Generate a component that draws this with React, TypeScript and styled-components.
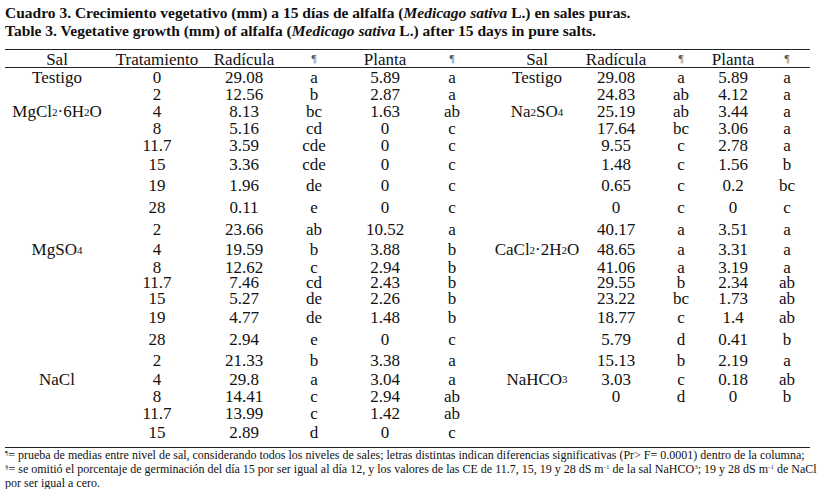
import React from 'react';
import styled, { createGlobalStyle } from 'styled-components';

const Global = createGlobalStyle`
  html, body { margin: 0; padding: 0; background: #fff; }
  body { font-family: "Liberation Serif", "Times New Roman", serif; color: #111; }
`;

/* column widths chosen so each column's centre sits where the reference centres it */
const COLS = '104px 96px 78px 62px 80px 54px 116px 42px 88px 16px 92px';

const Page = styled.div`
  width: 820px;
  height: 489px;
  padding: 4px 0 0 5px;
  box-sizing: border-box;
  overflow: hidden;
`;

const Caption = styled.div`
  font-weight: bold;
  font-size: 15.5px;
  line-height: 18px;
  white-space: nowrap;
`;

const Table = styled.div`
  margin-top: 9px;
  width: 805px;
  border-top: 1px solid #222;
  border-bottom: 1px solid #222;
  padding-bottom: 5px;
`;

const HeaderRow = styled.div`
  display: grid;
  grid-template-columns: ${COLS};
  height: 17px;
  border-bottom: 1px solid #222;
  font-size: 17px;
`;

const Row = styled.div<{ $h: number }>`
  display: grid;
  grid-template-columns: ${COLS};
  height: ${(p) => p.$h}px;
  font-size: 17px;
  line-height: 1;
`;

const Cell = styled.div`
  display: flex;
  align-items: center;
  justify-content: center;
  white-space: nowrap;
`;

const Pilcrow = styled.span`
  font-size: 11px;
  color: #555;
  align-self: flex-start;
  margin-top: 2px;
`;

const Sub = styled.sub`
  font-size: 11px;
  vertical-align: -4px;
  line-height: 0;
`;

const Notes = styled.div`
  font-size: 12px;
  line-height: 14px;
  white-space: nowrap;
`;

const Mark = styled.sup`
  font-size: 7px;
  vertical-align: 4px;
  line-height: 0;
  color: #333;
`;

const MgCl = () => (
  <>MgCl<Sub>2</Sub>·6H<Sub>2</Sub>O</>
);
const Na2SO4 = () => (
  <>Na<Sub>2</Sub>SO<Sub>4</Sub></>
);
const MgSO4 = () => (
  <>MgSO<Sub>4</Sub></>
);
const CaCl = () => (
  <>CaCl<Sub>2</Sub>·2H<Sub>2</Sub>O</>
);
const NaHCO3 = () => (
  <>NaHCO<Sub>3</Sub></>
);

type R = {
  h: number;
  s1?: React.ReactNode;
  t: string;
  l: [string, string, string, string];
  s2?: React.ReactNode;
  r?: [string, string, string, string];
};

const rows: R[] = [
  { h: 18, s1: 'Testigo', t: '0', l: ['29.08', 'a', '5.89', 'a'], s2: 'Testigo', r: ['29.08', 'a', '5.89', 'a'] },
  { h: 17, t: '2', l: ['12.56', 'b', '2.87', 'a'], r: ['24.83', 'ab', '4.12', 'a'] },
  { h: 17, s1: <MgCl />, t: '4', l: ['8.13', 'bc', '1.63', 'ab'], s2: <Na2SO4 />, r: ['25.19', 'ab', '3.44', 'a'] },
  { h: 17, t: '8', l: ['5.16', 'cd', '0', 'c'], r: ['17.64', 'bc', '3.06', 'a'] },
  { h: 17, t: '11.7', l: ['3.59', 'cde', '0', 'c'], r: ['9.55', 'c', '2.78', 'a'] },
  { h: 20, t: '15', l: ['3.36', 'cde', '0', 'c'], r: ['1.48', 'c', '1.56', 'b'] },
  { h: 22, t: '19', l: ['1.96', 'de', '0', 'c'], r: ['0.65', 'c', '0.2', 'bc'] },
  { h: 22, t: '28', l: ['0.11', 'e', '0', 'c'], r: ['0', 'c', '0', 'c'] },
  { h: 22, t: '2', l: ['23.66', 'ab', '10.52', 'a'], r: ['40.17', 'a', '3.51', 'a'] },
  { h: 19, s1: <MgSO4 />, t: '4', l: ['19.59', 'b', '3.88', 'b'], s2: <CaCl />, r: ['48.65', 'a', '3.31', 'a'] },
  { h: 15, t: '8', l: ['12.62', 'c', '2.94', 'b'], r: ['41.06', 'a', '3.19', 'a'] },
  { h: 15, t: '11.7', l: ['7.46', 'cd', '2.43', 'b'], r: ['29.55', 'b', '2.34', 'ab'] },
  { h: 18, t: '15', l: ['5.27', 'de', '2.26', 'b'], r: ['23.22', 'bc', '1.73', 'ab'] },
  { h: 21, t: '19', l: ['4.77', 'de', '1.48', 'b'], r: ['18.77', 'c', '1.4', 'ab'] },
  { h: 22, t: '28', l: ['2.94', 'e', '0', 'c'], r: ['5.79', 'd', '0.41', 'b'] },
  { h: 20, t: '2', l: ['21.33', 'b', '3.38', 'a'], r: ['15.13', 'b', '2.19', 'a'] },
  { h: 18, s1: 'NaCl', t: '4', l: ['29.8', 'a', '3.04', 'a'], s2: <NaHCO3 />, r: ['3.03', 'c', '0.18', 'ab'] },
  { h: 17, t: '8', l: ['14.41', 'c', '2.94', 'ab'], r: ['0', 'd', '0', 'b'] },
  { h: 17, t: '11.7', l: ['13.99', 'c', '1.42', 'ab'] },
  { h: 20, t: '15', l: ['2.89', 'd', '0', 'c'] },
];

export default function App() {
  return (
    <Page>
      <Global />
      <Caption>
        Cuadro 3. Crecimiento vegetativo (mm) a 15 días de alfalfa (<i>Medicago sativa</i> L.) en sales puras.
        <br />
        Table 3. Vegetative growth (mm) of alfalfa (<i>Medicago sativa</i> L.) after 15 days in pure salts.
      </Caption>
      <Table>
        <HeaderRow>
          <Cell>Sal</Cell>
          <Cell>Tratamiento</Cell>
          <Cell>Radícula</Cell>
          <Cell><Pilcrow>¶</Pilcrow></Cell>
          <Cell>Planta</Cell>
          <Cell><Pilcrow>¶</Pilcrow></Cell>
          <Cell>Sal</Cell>
          <Cell>Radícula</Cell>
          <Cell><Pilcrow>¶</Pilcrow></Cell>
          <Cell>Planta</Cell>
          <Cell><Pilcrow>¶</Pilcrow></Cell>
        </HeaderRow>
        {rows.map((r, i) => (
          <Row key={i} $h={r.h}>
            <Cell>{r.s1}</Cell>
            <Cell>{r.t}</Cell>
            {r.l.map((v, j) => (
              <Cell key={'l' + j}>{v}</Cell>
            ))}
            <Cell>{r.s2}</Cell>
            {(r.r ?? ['', '', '', '']).map((v, j) => (
              <Cell key={'r' + j}>{v}</Cell>
            ))}
          </Row>
        ))}
      </Table>
      <Notes>
        <Mark>¶</Mark>= prueba de medias entre nivel de sal, considerando todos los niveles de sales; letras distintas indican diferencias significativas (Pr&gt; F= 0.0001) dentro de la columna;
        <br />
        <Mark>§</Mark>= se omitió el porcentaje de germinación del día 15 por ser igual al día 12, y los valores de las CE de 11.7, 15, 19 y 28 dS m<Mark>-1</Mark> de la sal NaHCO<Mark>3</Mark>; 19 y 28 dS m<Mark>-1</Mark> de NaCl
        <br />
        por ser igual a cero.
      </Notes>
    </Page>
  );
}
